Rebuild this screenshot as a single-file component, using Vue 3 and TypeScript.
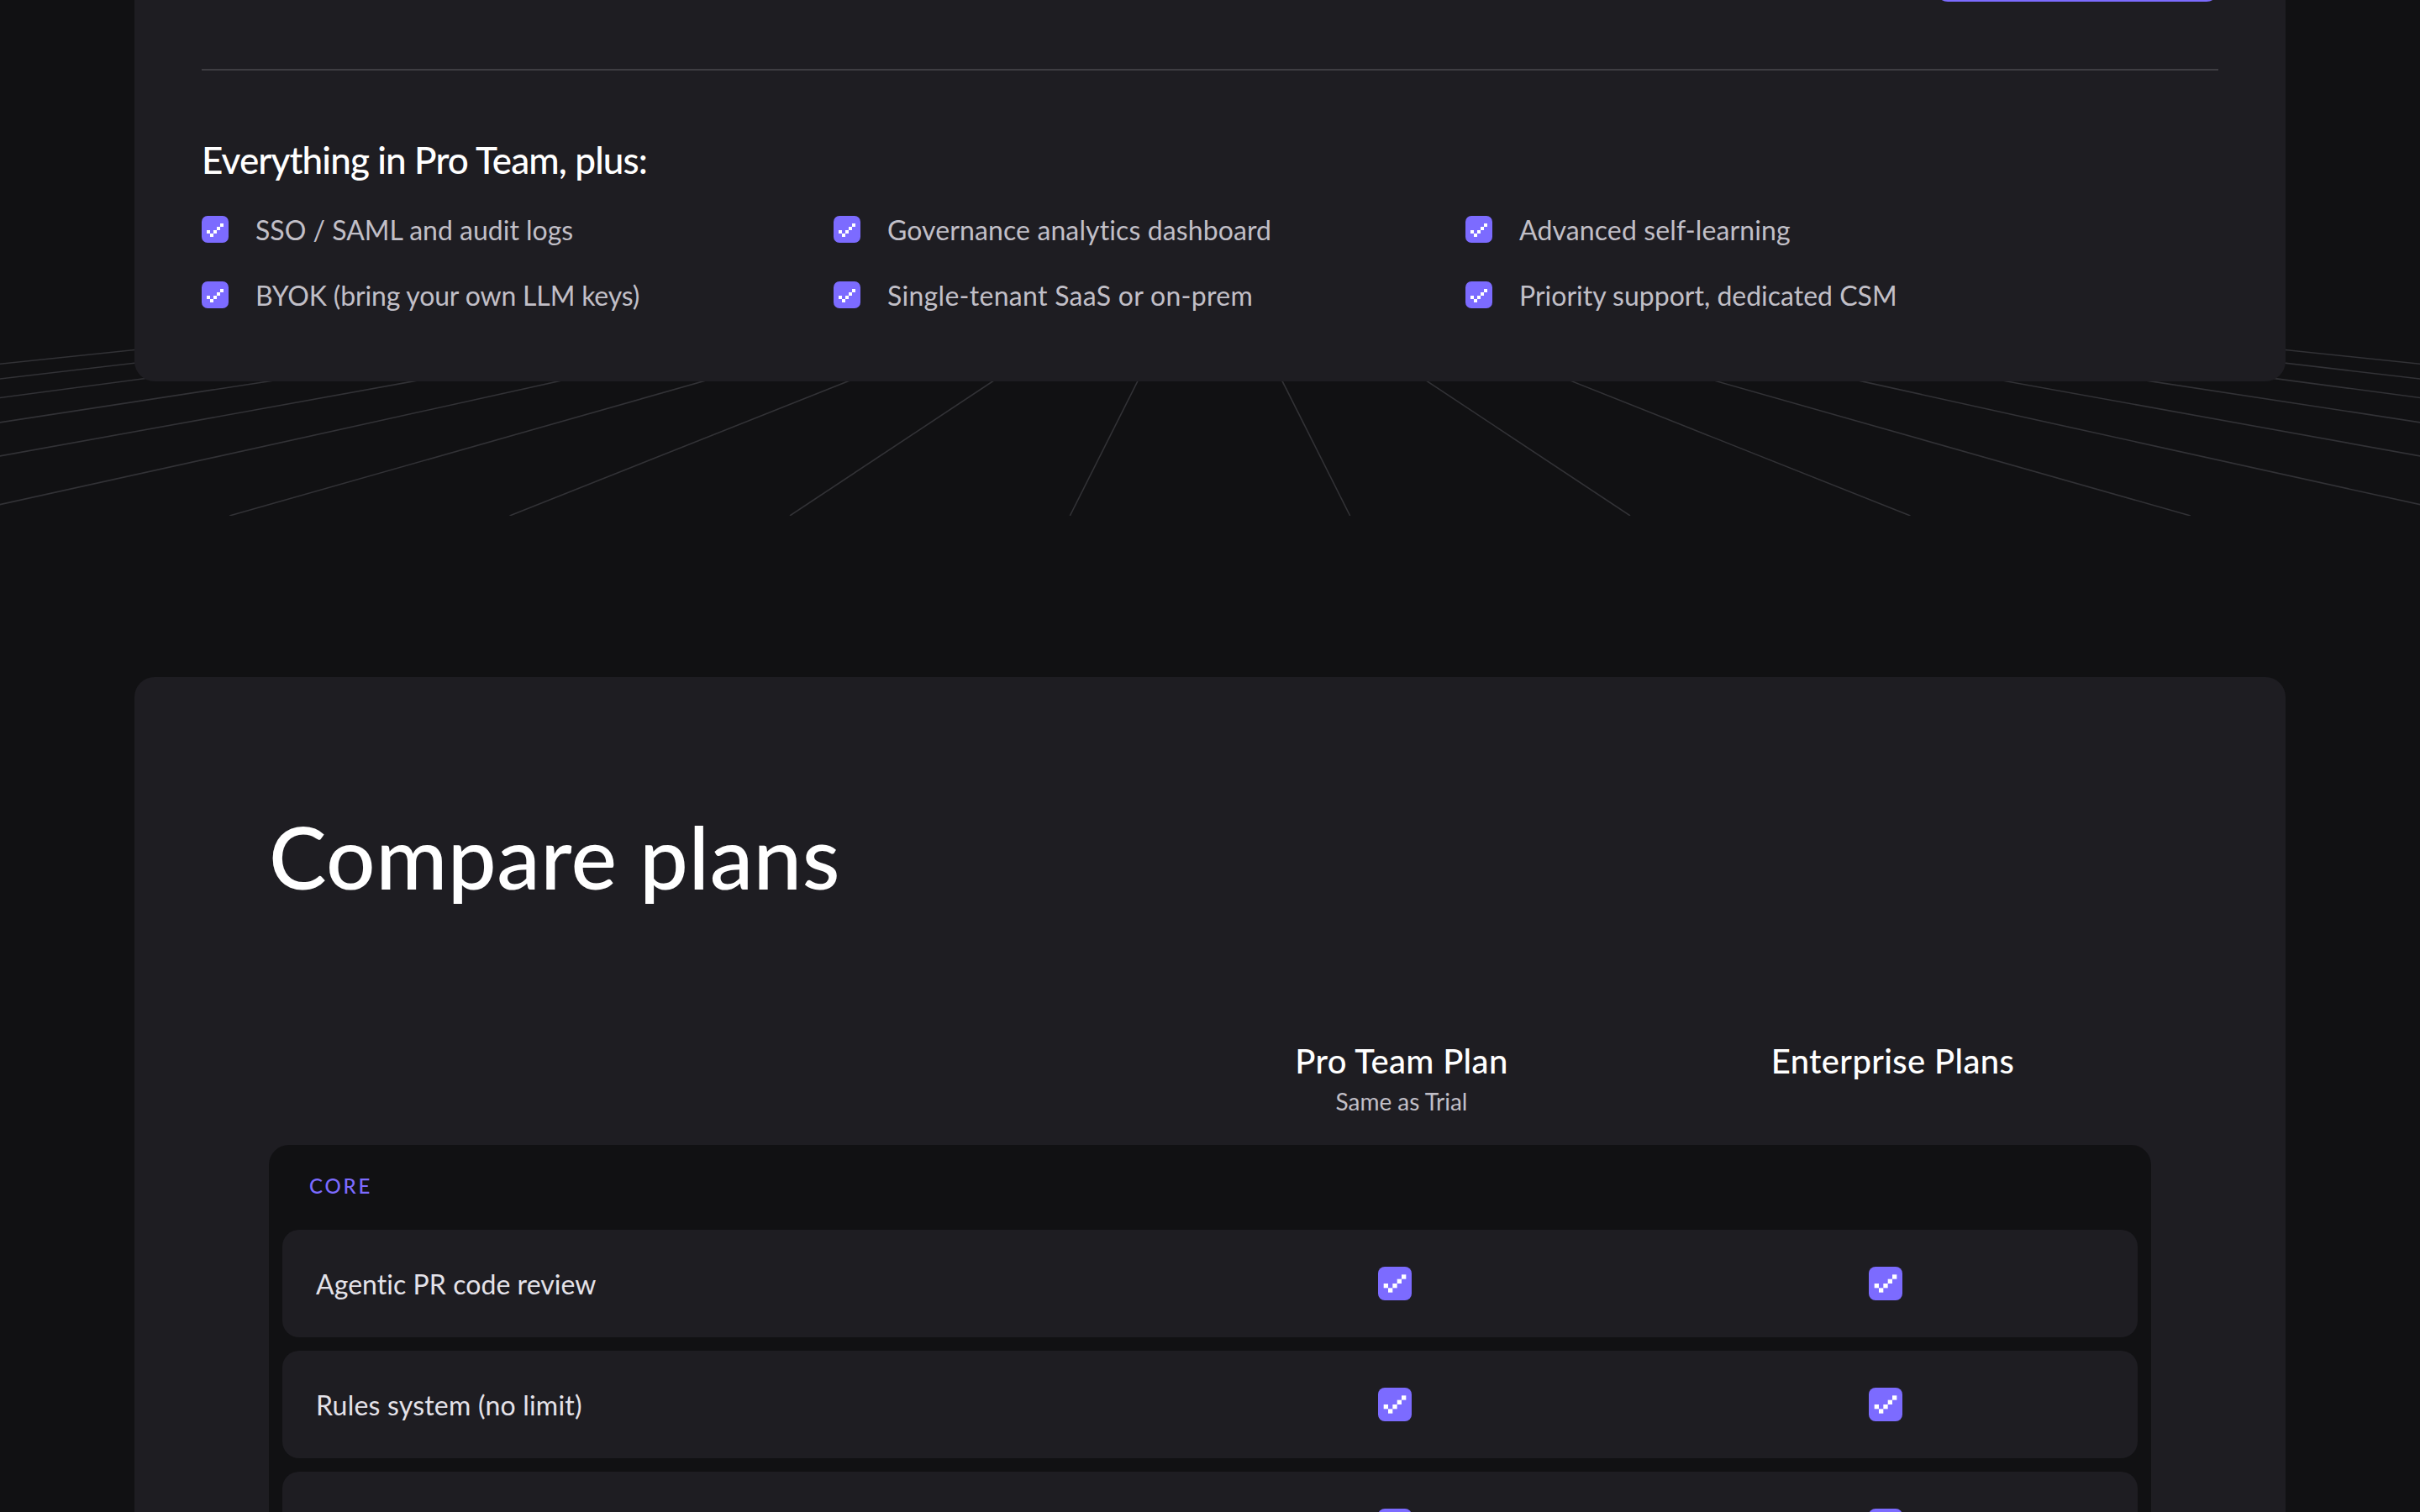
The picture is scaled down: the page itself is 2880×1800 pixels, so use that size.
<script setup lang="ts">
interface TextItem {
  label: string
  tracking: number
}

const features: TextItem[] = [
  { label: 'SSO / SAML and audit logs', tracking: 0 },
  { label: 'Governance analytics dashboard', tracking: 0.11 },
  { label: 'Advanced self-learning', tracking: 0.12 },
  { label: 'BYOK (bring your own LLM keys)', tracking: -0.17 },
  { label: 'Single-tenant SaaS or on-prem', tracking: 0.29 },
  { label: 'Priority support, dedicated CSM', tracking: 0 },
]

const coreRows: TextItem[] = [
  { label: 'Agentic PR code review', tracking: 0.05 },
  { label: 'Rules system (no limit)', tracking: 0.21 },
  { label: '', tracking: 0 },
]

// Perspective floor: rays fan out symmetrically from a vanishing point.
const vanishY = 282.6
const floorTop = 404
const floorBottom = 614
const spread = 1.006
const rays = Array.from({ length: 20 }, (_, i) => {
  const k = i - 9.5
  const at = (y: number) => 1440 + k * spread * (y - vanishY)
  return { x1: at(floorTop), x2: at(floorBottom) }
})

const smallTick = [[6, 17], [10, 21], [14, 17], [18, 13], [22, 9]]
const largeTick = [[6.67, 20], [12, 25.33], [17.33, 20], [22.67, 14.67], [28, 9.33]]
</script>

<template>
  <div class="page">
    <svg class="floor" viewBox="0 0 2880 614" width="2880" height="614" fill="none">
      <line
        v-for="(r, i) in rays"
        :key="i"
        :x1="r.x1"
        :y1="floorTop"
        :x2="r.x2"
        :y2="floorBottom"
        stroke="#323236"
        stroke-width="1.6"
      />
    </svg>

    <section class="card enterprise">
      <div class="cta-clip"><div class="cta"></div></div>
      <div class="divider"></div>
      <h3>Everything in Pro Team, plus:</h3>
      <ul class="features">
        <li v-for="f in features" :key="f.label">
          <svg width="32" height="32" viewBox="0 0 32 32">
            <rect width="32" height="32" rx="7" fill="#7c6bff" />
            <rect v-for="(p, i) in smallTick" :key="i" :x="p[0]" :y="p[1]" width="4" height="4" fill="#fff" />
          </svg>
          <span :style="{ letterSpacing: f.tracking + 'px' }">{{ f.label }}</span>
        </li>
      </ul>
    </section>

    <section class="card compare">
      <h2>Compare plans</h2>
      <div class="plans">
        <div class="plan">
          <div class="plan-name">Pro Team Plan</div>
          <div class="plan-note">Same as Trial</div>
        </div>
        <div class="plan">
          <div class="plan-name">Enterprise Plans</div>
        </div>
      </div>
      <div class="table">
        <div class="group">CORE</div>
        <div v-for="(row, n) in coreRows" :key="n" class="row">
          <span class="name" :style="{ letterSpacing: row.tracking + 'px' }">{{ row.label }}</span>
          <span v-for="c in 2" :key="c" class="cell">
            <svg width="40" height="40" viewBox="0 0 40 40">
              <rect width="40" height="40" rx="8" fill="#7c6bff" />
              <rect v-for="(p, i) in largeTick" :key="i" :x="p[0]" :y="p[1]" width="5.33" height="5.33" fill="#fff" />
            </svg>
          </span>
        </div>
      </div>
    </section>
  </div>
</template>

<style>
body {
  margin: 0;
  background: #111113;
  overflow: hidden;
}
</style>

<style scoped>
.page {
  position: relative;
  height: 1800px;
  overflow: hidden;
  background: #111113;
  font-family: Lato, 'Open Sans', sans-serif;
  color: #fff;
}
.floor {
  position: absolute;
  left: 0;
  top: 0;
}
.card {
  position: relative;
  box-sizing: border-box;
  margin: 0 160px;
  background: #1e1d22;
}
.enterprise {
  height: 454px;
  padding: 0 80px;
  border-radius: 0 0 24px 24px;
}
.cta-clip {
  display: flex;
  align-items: flex-end;
  justify-content: flex-end;
  height: 2px;
  overflow: hidden;
}
.cta {
  flex: none;
  width: 336px;
  height: 96px;
  border-radius: 14px;
  background: #7c6bff;
}
.divider {
  height: 2px;
  margin-top: 80px;
  background: #3e3d42;
}
h3 {
  margin: 80px 0 0;
  font-size: 44px;
  font-weight: 500;
  line-height: 52px;
  letter-spacing: -0.87px;
}
.features {
  display: grid;
  grid-template-columns: repeat(3, 752px);
  row-gap: 46px;
  margin: 41px 0 0;
  padding: 0;
  list-style: none;
}
.features li {
  display: flex;
  align-items: center;
  gap: 32px;
  height: 32px;
  font-size: 32px;
  line-height: 32px;
  color: #c1bfc7;
  white-space: nowrap;
}
.features span {
  padding-top: 1px;
}
.compare {
  height: 1400px;
  margin-top: 352px;
  padding: 161px 160px 0;
  border-radius: 24px 24px 0 0;
}
h2 {
  margin: 0;
  font-size: 103px;
  font-weight: 500;
  line-height: 104px;
  letter-spacing: 0.5px;
}
.plans {
  display: flex;
  justify-content: flex-end;
  height: 91px;
  margin-top: 168px;
  padding-right: 15px;
}
.plan {
  width: 585px;
  text-align: center;
}
.plan:first-child {
  width: 584px;
}
.plan-name {
  font-size: 40px;
  font-weight: 500;
  line-height: 48px;
  letter-spacing: 0.36px;
}
.plan-note {
  margin-top: 4px;
  font-size: 28px;
  line-height: 40px;
  letter-spacing: -0.03px;
  color: #c1bfc7;
}
.table {
  display: flex;
  flex-direction: column;
  gap: 16px;
  height: 800px;
  margin-top: 33px;
  padding: 0 16px;
  border-radius: 24px 24px 0 0;
  background: #111113;
}
.group {
  box-sizing: border-box;
  height: 85px;
  padding: 33px 32px 0;
  font-size: 24px;
  font-weight: 500;
  line-height: 32px;
  letter-spacing: 2.8px;
  color: #7c6bff;
}
.row {
  display: grid;
  grid-template-columns: 1fr 584px 584px;
  align-items: center;
  box-sizing: border-box;
  height: 128px;
  padding: 0 8px 0 40px;
  border-radius: 20px;
  background: #1e1d22;
}
.name {
  padding-top: 1px;
  font-size: 32px;
  line-height: 40px;
  color: #e4e2e9;
}
.cell {
  display: flex;
  justify-content: center;
}
</style>
